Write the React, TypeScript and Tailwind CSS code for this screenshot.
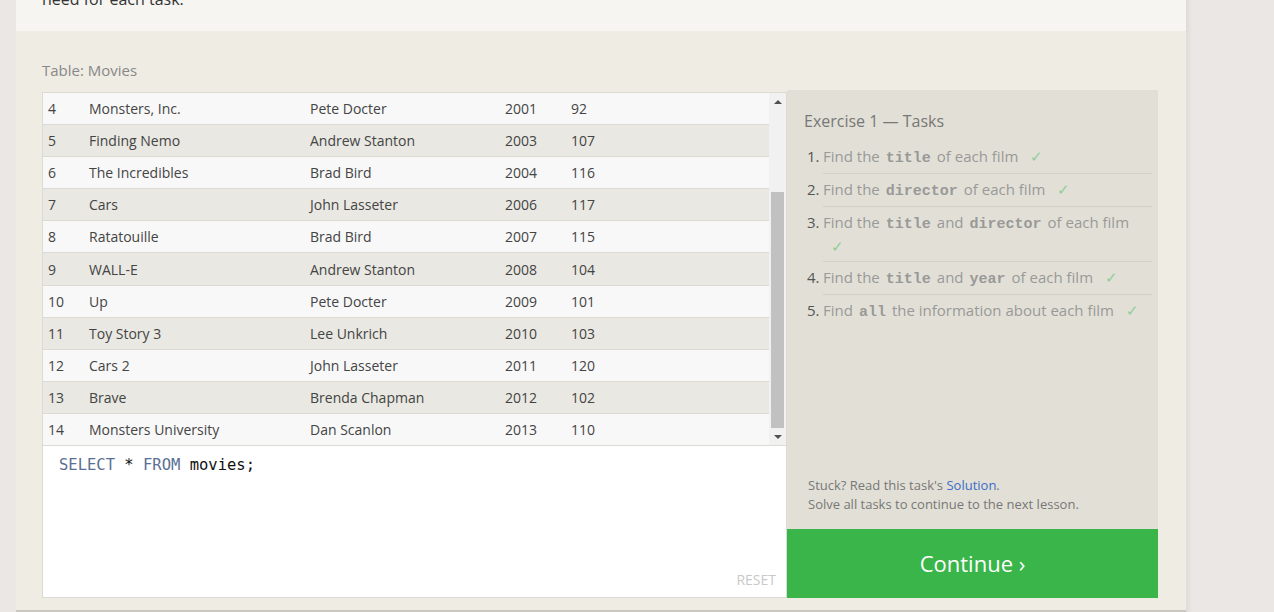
import React from "react";

const rows: [number, string, string, number, number][] = [
  [4, "Monsters, Inc.", "Pete Docter", 2001, 92],
  [5, "Finding Nemo", "Andrew Stanton", 2003, 107],
  [6, "The Incredibles", "Brad Bird", 2004, 116],
  [7, "Cars", "John Lasseter", 2006, 117],
  [8, "Ratatouille", "Brad Bird", 2007, 115],
  [9, "WALL-E", "Andrew Stanton", 2008, 104],
  [10, "Up", "Pete Docter", 2009, 101],
  [11, "Toy Story 3", "Lee Unkrich", 2010, 103],
  [12, "Cars 2", "John Lasseter", 2011, 120],
  [13, "Brave", "Brenda Chapman", 2012, 102],
  [14, "Monsters University", "Dan Scanlon", 2013, 110],
];

const Code = ({ children }: { children: React.ReactNode }) => (
  <code className="mx-[6px] font-bold text-[15px] leading-none text-[#999] [font-family:'Liberation_Mono',monospace]">
    {children}
  </code>
);

const Check = () => <span className="ml-[12px] text-[#8fcc98]">✓</span>;

const tasks: React.ReactNode[] = [
  <>Find the<Code>title</Code>of each film<Check /></>,
  <>Find the<Code>director</Code>of each film<Check /></>,
  <>Find the<Code>title</Code>and<Code>director</Code>of each film<br /><span className="-ml-[4px]"><Check /></span></>,
  <>Find the<Code>title</Code>and<Code>year</Code>of each film<Check /></>,
  <>Find<Code>all</Code>the information about each film<Check /></>,
];

export default function App() {
  return (
    <div className="flex h-[612px] w-[1274px] overflow-hidden bg-[#ebe7e4] [font-family:'Open_Sans',sans-serif]">
      <div className="ml-[16px] flex w-[1170px] flex-col">
        <div className="h-[31px] overflow-hidden bg-[#f6f5f1] px-[26px]">
          <div className="-mt-[13px] text-[16px] leading-[24px] text-[#333]">need for each task.</div>
        </div>
        <div className="flex h-[581px] shrink-0 flex-col border-b-2 border-[#c9c7c2] bg-[#efece4] pl-[26px] pr-[28px]">
          <div className="pt-[28px] pb-[9px] text-[15px] leading-[22px] text-[#888]">Table: Movies</div>
          <div className="flex">
            <div className="flex w-[745px] flex-col">
              <div className="mt-[2px] flex h-[354px] border border-[#dcdad3] bg-[#f8f8f8]">
                <div className="flex-1 overflow-hidden">
                  {rows.map((r, i) => (
                    <div
                      key={r[0]}
                      className={`flex items-center border-b border-[#dcdad3] text-[14px] text-[#444] ${
                        i === 5 ? "h-[33px]" : "h-[32px]"
                      } ${i % 2 === 0 ? "bg-[#f8f8f8]" : "bg-[#e9e8e2]"}`}
                    >
                      <div className="w-[46px] pl-[5px]">{r[0]}</div>
                      <div className="w-[221px]">{r[1]}</div>
                      <div className="w-[195px]">{r[2]}</div>
                      <div className="w-[66px]">{r[3]}</div>
                      <div>{r[4]}</div>
                    </div>
                  ))}
                </div>
                <div className="flex w-[17px] flex-col items-center bg-[#f1f1f1]">
                  <div className="flex h-[17px] w-full items-center justify-center">
                    <div className="h-0 w-0 border-x-[4px] border-b-[4px] border-x-transparent border-b-[#505050]" />
                  </div>
                  <div className="flex w-full flex-1 flex-col px-[2px]">
                    <div className="h-[82px]" />
                    <div className="h-[236px] bg-[#c1c1c1]" />
                  </div>
                  <div className="flex h-[17px] w-full items-center justify-center">
                    <div className="h-0 w-0 border-x-[4px] border-t-[4px] border-x-transparent border-t-[#505050]" />
                  </div>
                </div>
              </div>
              <div className="flex h-[152px] flex-col border-x border-b border-[#dcdad3] bg-white pl-[16px] pr-[10px] pt-[8px] pb-[7px]">
                <div className="text-[15.5px] leading-[22px] text-[#111] [font-family:'DejaVu_Sans_Mono',monospace]">
                  <span className="text-[#5b6f94]">SELECT</span> * <span className="text-[#5b6f94]">FROM</span> movies;
                </div>
                <div className="mt-auto self-end text-[14px] text-[#c8c8c8]">RESET</div>
              </div>
            </div>
            <div className="flex w-[371px] flex-col">
              <div className="flex flex-1 flex-col bg-[#e2e0d6] pl-[17px] pr-[6px] pt-[19px] pb-[15px]">
                <div className="text-[16px] leading-[24px] text-[#777]">Exercise 1 — Tasks</div>
                <ol className="mt-[8px] pl-[3px] text-[15px] text-[#999]">
                  {tasks.map((t, i) => (
                    <li key={i} className="flex">
                      <span className="w-[16px] pt-[4px] leading-[23px] text-[#555]">{i + 1}.</span>
                      <div
                        className={`flex-1 ${
                          i < 4 ? "border-b border-[#d3d1c7]" : ""
                        } ${i === 2 ? "pt-[3px] pb-[3px] leading-[24px]" : "pt-[4px] pb-[5px] leading-[23px]"}`}
                      >
                        {t}
                      </div>
                    </li>
                  ))}
                </ol>
                <div className="mt-auto pl-[4px] text-[13px] leading-[19px] text-[#777]">
                  <div>
                    Stuck? Read this task's <span className="text-[#3b6cc9]">Solution</span>.
                  </div>
                  <div>Solve all tasks to continue to the next lesson.</div>
                </div>
              </div>
              <div className="flex h-[69px] items-center justify-center bg-[#39b54a] text-[22px] text-white">
                Continue ›
              </div>
            </div>
          </div>
        </div>
      </div>
      <div className="w-[6px] bg-gradient-to-r from-[#dedad7] to-[#ebe7e4]" />
    </div>
  );
}
